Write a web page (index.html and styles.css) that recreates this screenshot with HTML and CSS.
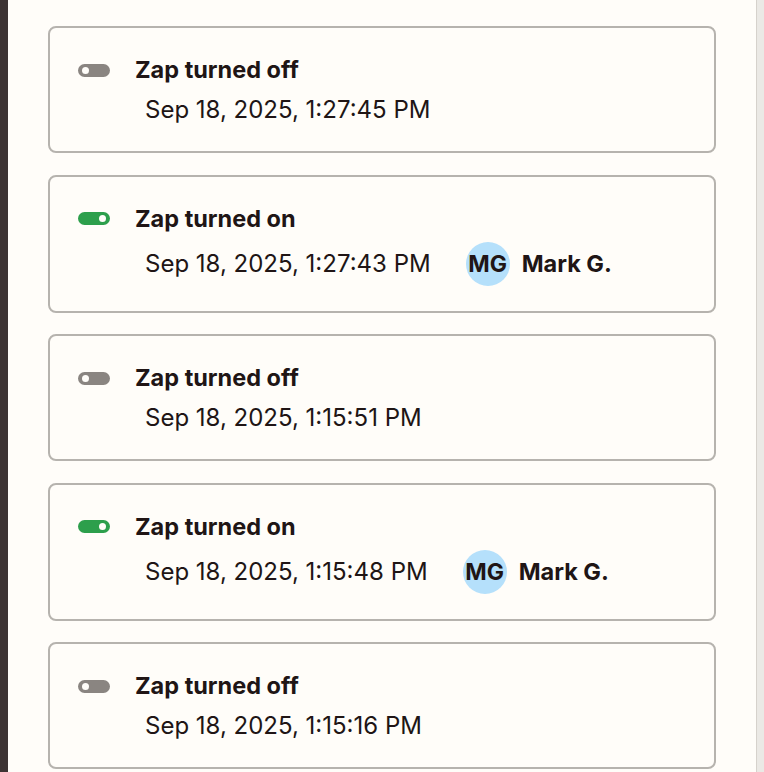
FILE: index.html
```html
<!DOCTYPE html>
<html lang="en">
<head>
  <meta charset="UTF-8">
  <meta name="viewport" content="width=device-width, initial-scale=1.0">
  <title>Zap history</title>
  <link rel="stylesheet" href="styles.css">
</head>
<body>

  <div class="frame">
    <div class="side-bar"></div>

    <main class="history">
      <div class="event">
        <div class="event-head">
          <span class="toggle"></span>
          <span class="event-title">Zap turned off</span>
        </div>
        <div class="event-meta">
          <span class="event-date">Sep 18, 2025, 1:27:45 PM</span>
        </div>
      </div>

      <div class="event">
        <div class="event-head">
          <span class="toggle on"></span>
          <span class="event-title">Zap turned on</span>
        </div>
        <div class="event-meta">
          <span class="event-date">Sep 18, 2025, 1:27:43 PM</span>
          <span class="avatar">MG</span>
          <span class="user-name">Mark G.</span>
        </div>
      </div>

      <div class="event">
        <div class="event-head">
          <span class="toggle"></span>
          <span class="event-title">Zap turned off</span>
        </div>
        <div class="event-meta">
          <span class="event-date">Sep 18, 2025, 1:15:51 PM</span>
        </div>
      </div>

      <div class="event">
        <div class="event-head">
          <span class="toggle on"></span>
          <span class="event-title">Zap turned on</span>
        </div>
        <div class="event-meta">
          <span class="event-date">Sep 18, 2025, 1:15:48 PM</span>
          <span class="avatar">MG</span>
          <span class="user-name">Mark G.</span>
        </div>
      </div>

      <div class="event">
        <div class="event-head">
          <span class="toggle"></span>
          <span class="event-title">Zap turned off</span>
        </div>
        <div class="event-meta">
          <span class="event-date">Sep 18, 2025, 1:15:16 PM</span>
        </div>
      </div>
    </main>

    <div class="scroll-track"></div>
  </div>

</body>
</html>
```

FILE: styles.css
```css
body {
  font-family: Inter, 'Noto Sans', sans-serif;
  margin: 0;
  padding: 0;
  background-color: #fffdf9; /* Cream */
  color: #201515;
  overflow: hidden;
}

.frame {
  display: flex;
  height: 772px;
}

.side-bar {
  width: 8px;
  flex-shrink: 0;
  background-color: #3d3434;
}

.history {
  flex: 1;
  padding: 26px 40px 0;
  display: flex;
  flex-direction: column;
  gap: 21.5px;
}

.scroll-track {
  width: 7px;
  flex-shrink: 0;
  background-color: #ebe9e5;
  border-left: 1px solid #d6d2cc;
}

.event {
  flex-shrink: 0;
  border: 2px solid #b6b3ae;
  border-radius: 8px;
  padding: 30px 28px 25px;
  display: flex;
  flex-direction: column;
  gap: 11px;
}

.event-head {
  display: flex;
  align-items: center;
  height: 24px;
}

.toggle {
  position: relative;
  width: 32px;
  height: 13px;
  border-radius: 7px;
  background-color: #8a8581;
  margin-right: 25px;
}

.toggle::after {
  content: '';
  position: absolute;
  top: 3px;
  left: 4px;
  width: 7px;
  height: 7px;
  border-radius: 50%;
  background-color: #fffdf9;
}

.toggle.on {
  background-color: #2d9f4c; /* Green */
}

.toggle.on::after {
  left: auto;
  right: 4px;
}

.event-title {
  font-size: 23.5px;
  font-weight: 700;
  line-height: 24px;
}

.event-meta {
  display: flex;
  align-items: center;
  height: 33px;
  margin-left: 67px;
  font-size: 24px;
}

.event-meta:has(.avatar) {
  height: 44px;
}

.avatar {
  width: 44px;
  height: 44px;
  border-radius: 50%;
  background-color: #b5e0fb; /* Light blue */
  margin-left: 35px;
  display: flex;
  justify-content: center;
  align-items: center;
  font-weight: 700;
  font-size: 23px;
}

.user-name {
  margin-left: 12px;
  font-weight: 700;
  font-size: 23.5px;
}
```
